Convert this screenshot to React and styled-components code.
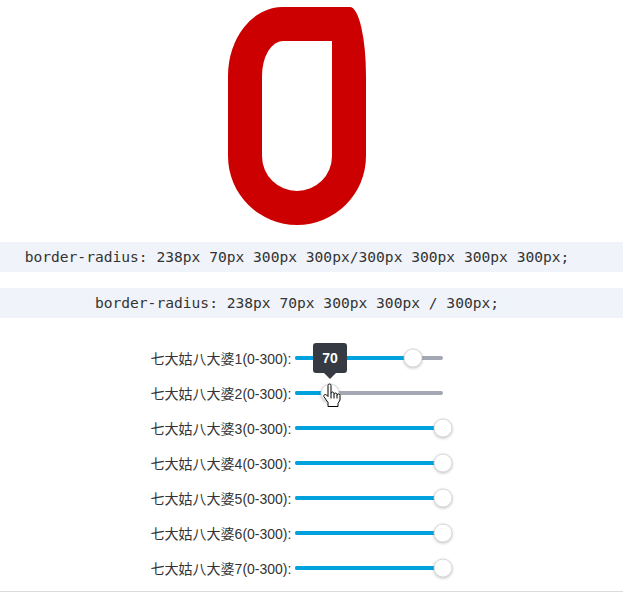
import React from "react";
import styled, { createGlobalStyle } from "styled-components";

const TRACK_WIDTH = 148;
const MAX = 300;

const GlobalStyle = createGlobalStyle`
  html, body {
    margin: 0;
    padding: 0;
    background: #fff;
  }
  body {
    font-family: "Liberation Sans", "Noto Sans CJK SC", sans-serif;
    color: #333;
  }
`;

const sliders = [
  { id: 1, value: 238 },
  { id: 2, value: 70, active: true },
  { id: 3, value: 300 },
  { id: 4, value: 300 },
  { id: 5, value: 300 },
  { id: 6, value: 300 },
  { id: 7, value: 300 }
];

export default function App() {
  return (
    <Page>
      <GlobalStyle />
      <Stage>
        <Shape />
      </Stage>
      <CodeBar>border-radius: 238px 70px 300px 300px/300px 300px 300px 300px;</CodeBar>
      <CodeBar $gap={16}>border-radius: 238px 70px 300px 300px / 300px;</CodeBar>
      <Controls>
        {sliders.map(s => {
          const pos = (s.value / MAX) * TRACK_WIDTH;
          return (
            <Row key={s.id}>
              <Label>七大姑八大婆{s.id}(0-300):</Label>
              <Track>
                <Fill style={{ width: pos }} />
                <Thumb style={{ left: pos }} />
                {s.active && (
                  <>
                    <Tip style={{ left: pos }}>{s.value}</Tip>
                    <Cursor style={{ left: pos - 7 }} />
                  </>
                )}
              </Track>
            </Row>
          );
        })}
      </Controls>
      <Footer />
    </Page>
  );
}

function Cursor({ style }) {
  return (
    <HandSvg style={style} width="19" height="25" viewBox="0 0 19 25">
      <path
        d="M6.5 1 C5.7 1 5 1.7 5 2.5 V13.5 L3.6 12 C2.9 11.3 1.8 11.3 1.2 12 C0.6 12.6 0.7 13.5 1.2 14.1 L5 19.5 V23.5 H15 V20.5 L17 17 V12.5 C17 11.7 16.3 11 15.5 11 C14.7 11 14 11.7 14 12.5 V11.5 C14 10.7 13.3 10 12.5 10 C11.7 10 11 10.7 11 11.5 V10.5 C11 9.7 10.3 9 9.5 9 C8.7 9 8 9.7 8 10.5 V2.5 C8 1.7 7.3 1 6.5 1 Z"
        fill="#fff"
        stroke="#000"
        strokeWidth="1"
        strokeLinejoin="round"
      />
      <path d="M8 10.5 V15.5 M11 11.5 V15.5 M14 12.5 V15.5" stroke="#000" strokeWidth="1" />
    </HandSvg>
  );
}

const Page = styled.div`
  width: 623px;
`;

const Stage = styled.div`
  width: 594px;
  padding-top: 7px;
  display: flex;
  justify-content: center;
`;

const Shape = styled.div`
  width: 70px;
  height: 150px;
  border: 34px solid #cc0000;
  border-radius: 238px 70px 300px 300px / 300px;
`;

const CodeBar = styled.div`
  margin-top: ${p => p.$gap || 17}px;
  padding-right: 29px;
  height: 30px;
  line-height: 30px;
  background: #f0f3f9;
  text-align: center;
  white-space: nowrap;
  font-family: "DejaVu Sans Mono", monospace;
  font-size: 14.6px;
  color: #333;
`;

const Controls = styled.div`
  width: 594px;
  margin-top: 22px;
  display: flex;
  flex-direction: column;
`;

const Row = styled.div`
  height: 35px;
  display: flex;
  align-items: center;
  justify-content: center;
`;

const Label = styled.span`
  font-size: 14px;
  color: #333;
  white-space: nowrap;
`;

const Track = styled.div`
  position: relative;
  margin-left: 4px;
  width: ${TRACK_WIDTH}px;
  height: 4px;
  border-radius: 2px;
  background: #a3a8b4;
`;

const Fill = styled.div`
  height: 100%;
  border-radius: 2px;
  background: #00a2dd;
`;

const Thumb = styled.div`
  position: absolute;
  top: 50%;
  width: 17px;
  height: 17px;
  border-radius: 50%;
  background: #fff;
  border: 1px solid #d9d9d9;
  box-shadow: 0 1px 3px rgba(0, 0, 0, 0.22);
  transform: translate(-50%, -50%);
`;

const Tip = styled.div`
  position: absolute;
  bottom: 22px;
  z-index: 2;
  min-width: 34px;
  height: 30px;
  line-height: 30px;
  box-sizing: border-box;
  padding: 0 8px;
  border-radius: 3px;
  background: #363b43;
  color: #fff;
  font-size: 14px;
  font-weight: bold;
  text-align: center;
  transform: translateX(-50%);
  &::after {
    content: "";
    position: absolute;
    left: 50%;
    top: 100%;
    margin-left: -6px;
    border: 6px solid transparent;
    border-top-color: #363b43;
    border-bottom: 0;
  }
`;

const HandSvg = styled.svg`
  position: absolute;
  top: -8px;
  z-index: 3;
`;

const Footer = styled.div`
  margin-top: 6px;
  border-top: 1px solid #dcdcdc;
  height: 10px;
`;
